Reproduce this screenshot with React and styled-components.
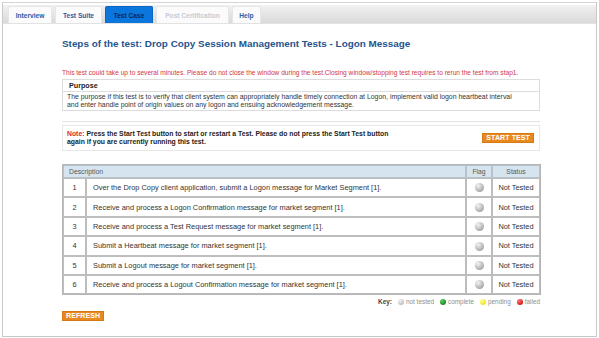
import React from "react";
import styled, { createGlobalStyle } from "styled-components";

const GlobalStyle = createGlobalStyle`
  html, body {
    margin: 0;
    padding: 0;
    background: #ffffff;
    font-family: "Liberation Sans", Arial, sans-serif;
  }
`;

const Page = styled.div`
  width: 599px;
  height: 338px;
  padding: 2px 2px 1px 2px;
  box-sizing: border-box;
  background: #fff;
`;

const Frame = styled.div`
  height: 100%;
  box-sizing: border-box;
  border: 1px solid #c9c9c9;
  border-top-color: #d4d4d4;
  padding: 2px 0 0 0;
  display: flex;
  flex-direction: column;
`;

const TabBar = styled.div`
  display: flex;
  gap: 3px;
  align-items: flex-end;
  height: 18px;
  padding: 0 0 0 5px;
  background: linear-gradient(#f1f1f1, #dadada);
  border-bottom: 1px solid #e2e2e2;
`;

const Tab = styled.div`
  height: 16px;
  width: ${(p) => p.$w}px;
  display: flex;
  align-items: center;
  justify-content: center;
  border-radius: 2px 2px 0 0;
  font-size: 6.6px;
  font-weight: bold;
  background: ${(p) => (p.$active ? "#0b76dc" : "#fbfbfb")};
  color: ${(p) =>
    p.$active ? "#0b2a52" : p.$disabled ? "#c4cbd3" : "#2560a8"};
  border: 1px solid ${(p) => (p.$active ? "#0a66c0" : "#e6e6e6")};
  border-bottom: none;
`;

const Content = styled.div`
  padding: 13px 0 0 58px;
  width: 479px;
  display: flex;
  flex-direction: column;
`;

const Heading = styled.h1`
  margin: 0 0 0 1px;
  font-size: 9.9px;
  font-weight: bold;
  color: #24548e;
  line-height: 14px;
`;

const Warning = styled.p`
  margin: 17px 0 2px 1px;
  font-size: 6.6px;
  color: #d2363f;
  line-height: 9px;
  white-space: nowrap;
`;

const Box = styled.div`
  border: 1px solid #dcdcdc;
  margin-left: 1px;
`;

const BoxHead = styled.div`
  font-size: 7.2px;
  font-weight: bold;
  color: #222;
  padding: 0 6px;
  height: 11px;
  line-height: 11px;
  border-bottom: 1px solid #dcdcdc;
`;

const BoxText = styled.div`
  font-size: 6.9px;
  color: #333;
  padding: 1px 18px 1px 4px;
  line-height: 8px;
`;

const Rule = styled.div`
  margin: 10px 0 3px 1px;
  border-top: 1px solid #e3e3e3;
`;

const NoteBox = styled.div`
  margin-left: 1px;
  border: 1px solid #e8e8e8;
  height: 24px;
  display: flex;
  align-items: center;
  justify-content: space-between;
  padding: 0 5px 0 4px;
`;

const NoteText = styled.div`
  font-size: 6.85px;
  font-weight: bold;
  color: #222;
  line-height: 8.3px;
`;

const Red = styled.span`
  color: #e02a2a;
`;

const OrangeButton = styled.button`
  font-family: "Liberation Sans", Arial, sans-serif;
  font-size: 7px;
  font-weight: bold;
  letter-spacing: 0.1px;
  color: #fff;
  background: #e8891f;
  border: 1px solid #d77a12;
  border-radius: 0;
  padding: 0 3px;
  height: 10px;
  line-height: 8px;
  cursor: pointer;
`;

const Table = styled.table`
  margin: 13px 0 0 1px;
  width: 479px;
  border-collapse: separate;
  border-spacing: 0;
  border: 1px solid #b5b5b5;
  table-layout: fixed;
  font-size: 7.4px;
  color: #333;
`;

const Th = styled.th`
  height: 11px;
  padding: 0 ${(p) => (p.$left ? 5 : 0)}px;
  background: #d5e4ee;
  color: #5a5a5a;
  font-weight: normal;
  font-size: 6.8px;
  text-align: ${(p) => (p.$left ? "left" : "center")};
  border: 1px solid #b8c2ca;
`;

const Td = styled.td`
  height: 17.4px;
  padding: 0 ${(p) => (p.$left ? 6 : 0)}px;
  text-align: ${(p) => (p.$left ? "left" : "center")};
  border: 1px solid #bdbdbd;
  background: #fff;
`;

const Ball = styled.span`
  display: inline-block;
  width: ${(p) => p.$size || 8}px;
  height: ${(p) => p.$size || 8}px;
  border-radius: 50%;
  vertical-align: middle;
  background: radial-gradient(
    circle at 35% 30%,
    ${(p) => p.$light || "#f4f4f4"} 0%,
    ${(p) => p.$dark || "#9a9a9a"} 85%
  );
`;

const KeyRow = styled.div`
  display: flex;
  justify-content: flex-end;
  align-items: center;
  gap: 3px;
  margin-top: 2px;
  font-size: 6.4px;
  color: #8f8f8f;
  height: 9px;
`;

const KeyLabel = styled.span`
  font-weight: bold;
  color: #444;
`;

const KeyItem = styled.span`
  display: inline-flex;
  align-items: center;
  gap: 2px;
  margin-left: 3px;
`;

const RefreshWrap = styled.div`
  display: flex;
  margin: 5px 0 0 1px;
`;

const steps = [
  "Over the Drop Copy client application, submit a Logon message for Market Segment [1].",
  "Receive and process a Logon Confirmation message for market segment [1].",
  "Receive and process a Test Request message for market segment [1].",
  "Submit a Heartbeat message for market segment [1].",
  "Submit a Logout message for market segment [1].",
  "Receive and process a Logout Confirmation message for market segment [1].",
];

export default function App() {
  return (
    <Page>
      <GlobalStyle />
      <Frame>
        <TabBar>
          <Tab $w={42}>Interview</Tab>
          <Tab $w={45}>Test Suite</Tab>
          <Tab $active $w={46}>Test Case</Tab>
          <Tab $disabled $w={71}>Post Certification</Tab>
          <Tab $w={27}>Help</Tab>
        </TabBar>
        <Content>
          <Heading>
            Steps of the test: Drop Copy Session Management Tests - Logon Message
          </Heading>
          <Warning>
            This test could take up to several minutes. Please do not close the
            window during the test.Closing window/stopping test requires to rerun
            the test from stap1.
          </Warning>
          <Box>
            <BoxHead>Purpose</BoxHead>
            <BoxText>
              The purpose if this test is to verify that client system can
              appropriately handle timely connection at Logon, implement valid
              logon heartbeat interval and enter handle point of origin values on
              any logon and ensuing acknowledgement message.
            </BoxText>
          </Box>
          <Rule />
          <NoteBox>
            <NoteText>
              <Red>Note:</Red> Press the Start Test button to start or restart a
              Test. Please do not press the Start Test button
              <br />
              again if you are currently running this test.
            </NoteText>
            <OrangeButton>START TEST</OrangeButton>
          </NoteBox>
          <Table>
            <colgroup>
              <col style={{ width: 23 }} />
              <col />
              <col style={{ width: 26 }} />
              <col style={{ width: 48 }} />
            </colgroup>
            <thead>
              <tr>
                <Th $left colSpan={2}>
                  Description
                </Th>
                <Th>Flag</Th>
                <Th>Status</Th>
              </tr>
            </thead>
            <tbody>
              {steps.map((s, i) => (
                <tr key={i}>
                  <Td>{i + 1}</Td>
                  <Td $left>{s}</Td>
                  <Td>
                    <Ball $size={9} />
                  </Td>
                  <Td>Not Tested</Td>
                </tr>
              ))}
            </tbody>
          </Table>
          <KeyRow>
            <KeyLabel>Key:</KeyLabel>
            <KeyItem>
              <Ball $size={6} $light="#f2f2f2" $dark="#b5b5b5" />
              not tested
            </KeyItem>
            <KeyItem>
              <Ball $size={6} $light="#5fd05f" $dark="#0d7a12" />
              complete
            </KeyItem>
            <KeyItem>
              <Ball $size={6} $light="#ffff9a" $dark="#e8e000" />
              pending
            </KeyItem>
            <KeyItem>
              <Ball $size={6} $light="#ff7a7a" $dark="#d00000" />
              failed
            </KeyItem>
          </KeyRow>
          <RefreshWrap>
            <OrangeButton>REFRESH</OrangeButton>
          </RefreshWrap>
        </Content>
      </Frame>
    </Page>
  );
}
